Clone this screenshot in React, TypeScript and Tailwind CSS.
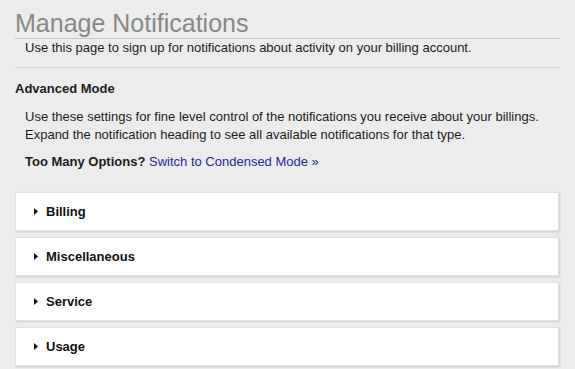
import React from "react";

const groups = ["Billing", "Miscellaneous", "Service", "Usage"];

function Caret() {
  return (
    <svg width="4" height="7" viewBox="0 0 4 7" className="shrink-0">
      <path d="M0 0 L4 3.5 L0 7 Z" fill="#111" />
    </svg>
  );
}

export default function App() {
  return (
    <div
      className="min-h-[369px] w-full bg-[#ececec] pl-[15px] pr-[15px] text-[13px] text-[#1c1c1c]"
      style={{ fontFamily: '"Liberation Sans", Arial, sans-serif' }}
    >
      {/* Page title */}
      <h1 className="border-b border-[#c6c6c6] pt-[8px] text-[25px] leading-[30px] font-normal text-[#888888]">
        Manage Notifications
      </h1>
      <p className="border-b border-[#d6d6d6] pl-[10px] pb-[10px] leading-[18px]">
        Use this page to sign up for notifications about activity on your billing account.
      </p>

      {/* Advanced mode intro */}
      <h2 className="mt-[12px] font-bold leading-[18px]">Advanced Mode</h2>
      <div className="pl-[10px]">
        <p className="mt-[10px] leading-[18px]">
          Use these settings for fine level control of the notifications you receive about your billings.
          <br />
          Expand the notification heading to see all available notifications for that type.
        </p>
        <p className="mt-[9px] leading-[18px]">
          <span className="font-bold">Too Many Options?</span>{" "}
          <a href="#" className="text-[#23299a]">
            Switch to Condensed Mode »
          </a>
        </p>
      </div>

      {/* Notification groups */}
      <div className="mt-[21px] mr-[1px] flex flex-col gap-[6px]">
        {groups.map((g) => (
          <div
            key={g}
            className="flex h-[39px] items-center gap-[8px] border border-[#e2e2e2] bg-white pl-[18px] shadow-[1px_1px_2px_rgba(0,0,0,0.13)]"
          >
            <Caret />
            <span className="font-bold leading-[18px] text-[#111]">{g}</span>
          </div>
        ))}
      </div>
    </div>
  );
}
